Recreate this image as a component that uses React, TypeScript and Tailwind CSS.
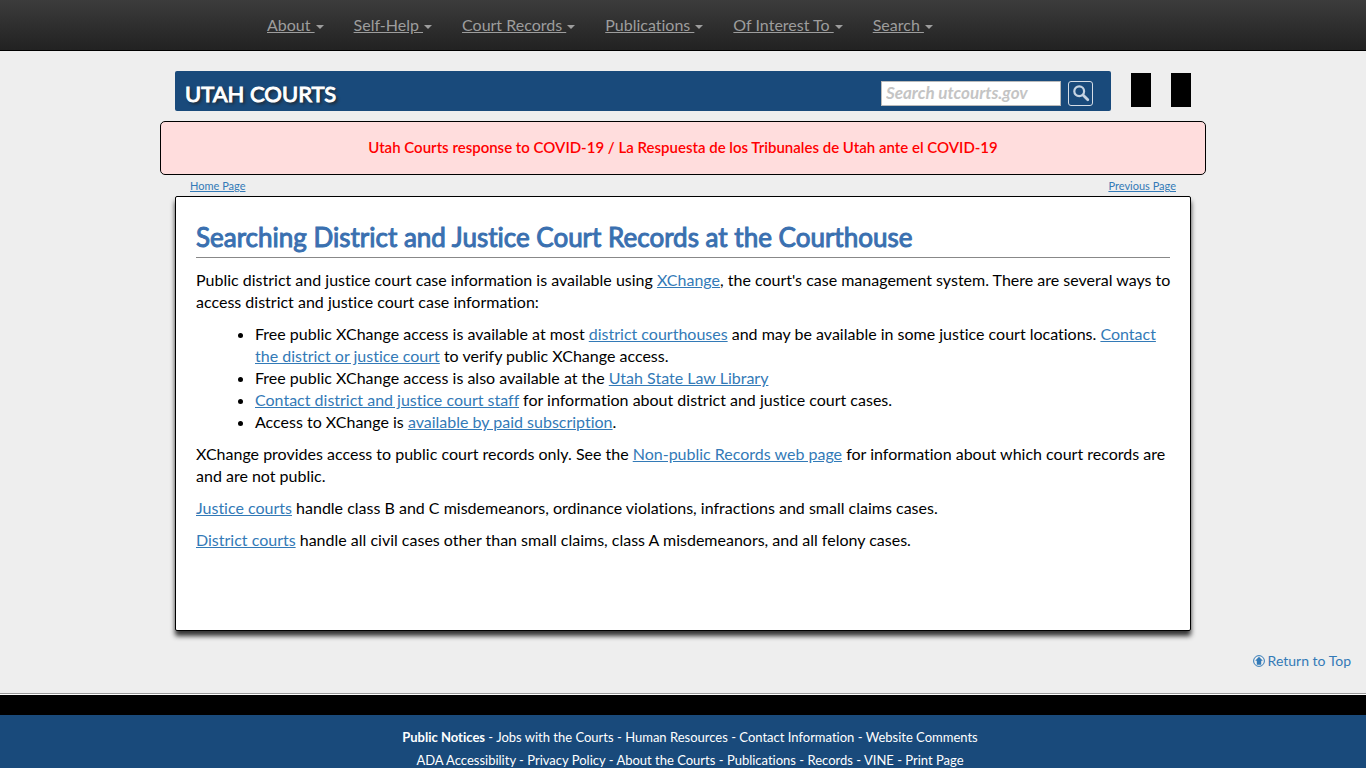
import { ReactNode } from 'react';

const navItems = ['About', 'Self-Help', 'Court Records', 'Publications', 'Of Interest To', 'Search'];

const footerTop = ['Jobs with the Courts', 'Human Resources', 'Contact Information', 'Website Comments'];
const footerBottom = ['ADA Accessibility', 'Privacy Policy', 'About the Courts', 'Publications', 'Records', 'VINE', 'Print Page'];

function TextLink({ children }: { children: ReactNode }) {
    return <a href="#" className="text-[#337ab7] underline">{children}</a>;
}

function Navbar() {
    return (
        <nav className="border-b border-black bg-linear-to-b from-[#3c3c3c] to-[#222]">
            <ul className="mx-auto flex h-[50px] max-w-[832px] items-center gap-[30px] text-[16px] text-[#9d9d9d]">
                {navItems.map((item) => (
                    <li key={item}>
                        <a href="#" className="flex items-center whitespace-pre">
                            <span className="underline">{item + ' '}</span>
                            <span className="mt-1 ml-px border-x-4 border-t-4 border-x-transparent border-t-[#9d9d9d]" />
                        </a>
                    </li>
                ))}
            </ul>
        </nav>
    );
}

function SiteHeader() {
    return (
        <header className="flex gap-5 px-[15px]">
            <div className="flex h-10 flex-1 items-center justify-between rounded-[2px] bg-[#194a7b] pr-[18px] pl-[10px]">
                <a href="#" className="pt-1 text-[22px] text-white [-webkit-text-stroke:1px_white] [text-shadow:2px_2px_3px_#222]">UTAH COURTS</a>
                <form className="flex items-center gap-[7px] pt-1" onSubmit={(e) => e.preventDefault()}>
                    <input
                        type="text"
                        aria-label="Search utcourts.gov"
                        placeholder="Search utcourts.gov"
                        className="h-[25px] w-[180px] border border-[#bbb] bg-white px-1 text-[17px] font-bold text-[#333] italic placeholder:text-[#c4c4c4]"
                    />
                    <button type="submit" aria-label="Search" className="flex h-[25px] w-[25px] items-center justify-center rounded-[3px] border border-[#d5dde6]">
                        <svg viewBox="0 0 18 18" className="h-[18px] w-[18px]" fill="none" stroke="#c5d3e2" strokeLinecap="round">
                            <circle cx="7.2" cy="7.2" r="4.9" strokeWidth="2.2" />
                            <path d="M11 11l4.8 4.8" strokeWidth="2.8" />
                        </svg>
                    </button>
                </form>
            </div>
            <div className="mt-[2px] h-[34px] w-5 bg-black" />
            <div className="mt-[2px] h-[34px] w-5 bg-black" />
        </header>
    );
}

function FooterLinks({ items }: { items: string[] }) {
    return (
        <>
            {items.map((item, i) => (
                <span key={item}>
                    {i > 0 && ' - '}
                    <a href="#">{item}</a>
                </span>
            ))}
        </>
    );
}

export default function App() {
    return (
        <div className="min-h-screen bg-[#eee] font-[Lato,sans-serif] text-black [font-variant-ligatures:none]">
            <Navbar />

            <div className="mx-auto max-w-[1046px] pt-5">
                <SiteHeader />

                <div className="mt-[10px] rounded-[5px] border border-black bg-[#fdd] pt-[15px] pb-[17px] text-center text-[15px] leading-5">
                    <a href="#" className="font-semibold text-[#f00]">
                        Utah Courts response to COVID-19 / La Respuesta de los Tribunales de Utah ante el COVID-19
                    </a>
                </div>

                <div className="flex h-[21px] items-end justify-between px-[30px] text-[11px] leading-5">
                    <TextLink>Home Page</TextLink>
                    <TextLink>Previous Page</TextLink>
                </div>

                <main className="mx-[15px] min-h-[435px] rounded-[2px] border border-black bg-white pt-6 pr-2 pl-5 text-[16px] leading-[22px] shadow-[0_5px_5px_#333]">
                    <h1 className="mr-3 mb-[11px] border-b border-[#888] pb-1 text-[26px] leading-[32px] text-[#3a70b0] [-webkit-text-stroke:1px_#3a70b0]">
                        Searching District and Justice Court Records at the Courthouse
                    </h1>
                    <p className="mb-[10px]">
                        Public district and justice court case information is available using <TextLink>XChange</TextLink>, the court's case
                        management system. There are several ways to access district and justice court case information:
                    </p>
                    <ul className="mb-[10px] list-disc pl-[59px]">
                        <li>
                            Free public XChange access is available at most <TextLink>district courthouses</TextLink> and may be available in
                            some justice court locations. <TextLink>Contact the district or justice court</TextLink> to verify public XChange access.
                        </li>
                        <li>Free public XChange access is also available at the <TextLink>Utah State Law Library</TextLink></li>
                        <li><TextLink>Contact district and justice court staff</TextLink> for information about district and justice court cases.</li>
                        <li>Access to XChange is <TextLink>available by paid subscription</TextLink>.</li>
                    </ul>
                    <p className="mb-[10px]">
                        XChange provides access to public court records only. See the <TextLink>Non-public Records web page</TextLink> for
                        information about which court records are and are not public.
                    </p>
                    <p className="mb-[10px]">
                        <TextLink>Justice courts</TextLink> handle class B and C misdemeanors, ordinance violations, infractions and small claims cases.
                    </p>
                    <p>
                        <TextLink>District courts</TextLink> handle all civil cases other than small claims, class A misdemeanors, and all felony cases.
                    </p>
                </main>
            </div>

            <div className="flex justify-end px-[15px] pt-5 pb-[22px]">
                <a href="#" className="flex items-center gap-[3px] text-[14px] leading-5 text-[#337ab7]">
                    <svg viewBox="0 0 12 12" className="h-3 w-3">
                        <circle cx="6" cy="6" r="5.4" fill="none" stroke="currentColor" />
                        <path d="M6 1.8l3.8 4H8.2v3.9H3.8V5.8H2.2z" fill="currentColor" />
                    </svg>
                    Return to Top
                </a>
            </div>

            <footer className="border-t border-[#999] text-[13px] leading-[23px] text-white">
                <div className="h-[21px] border-t border-white bg-black" />
                <div className="bg-[#194a7b] pt-[11px] pb-3 pl-[14px] text-center">
                    <p>
                        <a href="#" className="font-bold">Public Notices</a> - <FooterLinks items={footerTop} />
                    </p>
                    <p><FooterLinks items={footerBottom} /></p>
                </div>
            </footer>
        </div>
    );
}
